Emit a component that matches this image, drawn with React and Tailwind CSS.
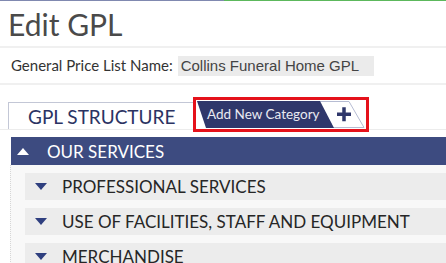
import React from 'react';

const Caret = ({ up = false, color }) => (
  <svg width="12" height="7" viewBox="0 0 12 7" className="shrink-0">
    {up ? (
      <polygon points="0,7 12,7 6,0" fill={color} />
    ) : (
      <polygon points="0,0 12,0 6,7" fill={color} />
    )}
  </svg>
);

const AddCategoryButton = () => (
  <div className="border-[3px] border-[#e5121b] p-px -mb-[3px]">
    <div className="relative w-[168px] h-[27px]">
      {/* tab shapes */}
      <svg width="168" height="27" viewBox="0 0 168 27" className="absolute inset-0">
        <polygon points="122,0.5 152,0.5 167,26.5 136,26.5" fill="#fff" stroke="#b6bcd3" strokeWidth="1" />
        <polygon points="0,0 123,0 137,27 9,27" fill="#2f376b" />
        <rect x="140" y="11.5" width="14" height="3.5" fill="#2f376b" />
        <rect x="145.25" y="6.25" width="3.5" height="14" fill="#2f376b" />
      </svg>
      <span className="relative block pl-[10px] leading-[27px] text-[13.5px] text-[#e9eaf2]">
        Add New Category
      </span>
    </div>
  </div>
);

const SubSection = ({ title }) => (
  <div className="flex items-center h-[27px] bg-[#ececec] pl-[10px] gap-[15px]">
    <Caret color="#2f3f7f" />
    <span className="text-[17px] text-[#262626] leading-none">{title}</span>
  </div>
);

export default function App() {
  const sections = [
    'PROFESSIONAL SERVICES',
    'USE OF FACILITIES, STAFF AND EQUIPMENT',
    'MERCHANDISE'
  ];

  return (
    <div className="w-[446px] h-[263px] overflow-hidden bg-white font-['Lato',sans-serif]">
      {/* top progress line */}
      <div className="flex h-px">
        <div className="w-[224px] bg-[#8089b0]" />
        <div className="flex-1 bg-[#5cb85c]" />
      </div>

      <h1 className="h-[47px] px-2 pt-[4px] text-[30px] leading-[38px] text-[#4a4a4a] border-b-2 border-[#f0f0f0]">
        Edit GPL
      </h1>

      <div className="flex items-center h-[37px] px-[11px] border-b-2 border-[#f0f0f0] text-[15px] text-[#333]">
        <span>General Price List Name:</span>
        <span className="ml-[5px] w-[196px] h-[20px] px-[3px] bg-[#ebebeb] font-['Liberation_Sans',sans-serif] text-[15px] leading-[20px] text-[#444]">
          Collins Funeral Home GPL
        </span>
      </div>

      {/* tabs */}
      <div className="flex items-end mt-[13px] h-[32px] border-b border-[#ececec]">
        <div className="ml-2 w-[185px] h-[27px] border-l border-t border-[#c3c7d6] bg-white pl-[19px] text-[19px] leading-[27px] text-[#2b3363]">
          GPL STRUCTURE
        </div>
        <AddCategoryButton />
      </div>

      {/* our services */}
      <div className="mt-[7px] ml-[11px] flex items-center h-[28px] bg-[#3d4b80] pl-[6px] gap-[18px]">
        <Caret up color="#ffffff" />
        <span className="text-[17px] text-white leading-none">OUR SERVICES</span>
      </div>

      <div className="ml-[10px] border-l border-dotted border-[#d6d6d6] bg-[#f8f8f8] pl-[14px] pt-[8px] flex flex-col gap-[8px] pb-4">
        {sections.map((s) => (
          <SubSection key={s} title={s} />
        ))}
      </div>
    </div>
  );
}
